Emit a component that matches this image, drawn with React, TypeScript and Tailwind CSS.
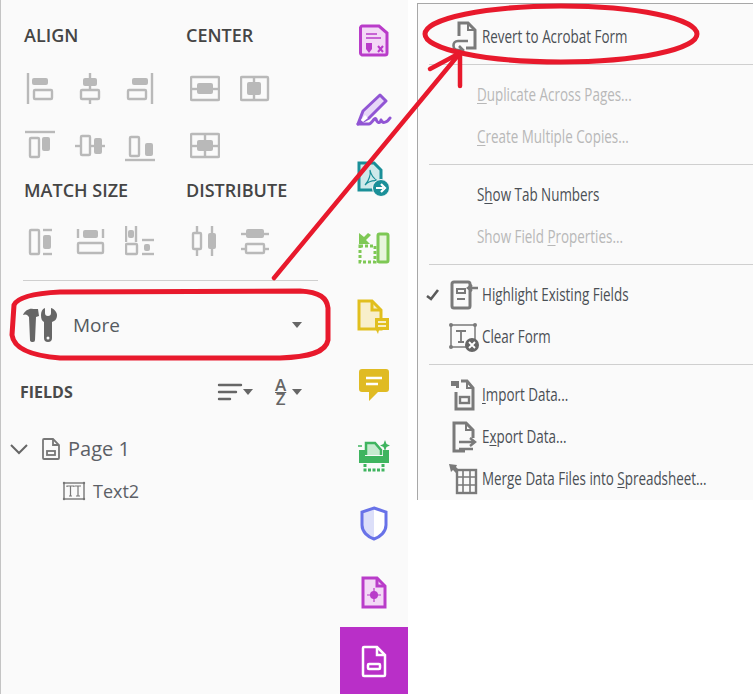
import React from "react";

const G = "#b9b9b9";

function Tool({ children }: { children: React.ReactNode }) {
  return (
    <svg width="30" height="32" viewBox="0 0 30 32" fill="none" stroke={G} strokeWidth="2.4" className="shrink-0">
      {children}
    </svg>
  );
}

const F = ({ x, y, w, h }: { x: number; y: number; w: number; h: number }) => (
  <rect x={x} y={y} width={w} height={h} rx="2" fill={G} stroke="none" />
);
const O = ({ x, y, w, h }: { x: number; y: number; w: number; h: number }) => (
  <rect x={x} y={y} width={w} height={h} rx="1" />
);
const L = ({ x1, y1, x2, y2 }: { x1: number; y1: number; x2: number; y2: number }) => (
  <line x1={x1} y1={y1} x2={x2} y2={y2} />
);

function SectionTitle({ children, className = "" }: { children: React.ReactNode; className?: string }) {
  return <div className={`text-[18px] leading-[24px] font-semibold text-[#454545] ${className}`}>{children}</div>;
}

function Row({ children }: { children: React.ReactNode }) {
  return <div className="flex gap-[20px]">{children}</div>;
}

function AlignPanel() {
  return (
    <div className="grid grid-cols-[162px_1fr] pl-[23px]">
      <div>
        <SectionTitle className="mt-[23px]">ALIGN</SectionTitle>
        <div className="ml-[1px] mt-[26px]">
          <Row>
            <Tool><L x1={3} y1={0} x2={3} y2={31} /><F x={7} y={5} w={16} h={7} /><O x={9} y={17} w={18} h={9} /></Tool>
            <Tool><L x1={15} y1={0} x2={15} y2={31} /><F x={8} y={5} w={14} h={8} /><rect x="6" y="17" width="18" height="9" rx="1" fill="#fafafa" /></Tool>
            <Tool><L x1={27} y1={0} x2={27} y2={31} /><F x={7} y={5} w={16} h={7} /><O x={3} y={17} w={18} h={9} /></Tool>
          </Row>
          <div className="mt-[25px]">
            <Row>
              <Tool><L x1={0} y1={2} x2={30} y2={2} /><O x={5} y={8} w={9} h={19} /><F x={17} y={7} w={8} h={14} /></Tool>
              <Tool><L x1={0} y1={16} x2={30} y2={16} /><rect x="6" y="6" width="9" height="19" rx="1" fill="#fafafa" /><F x={19} y={8} w={8} h={16} /></Tool>
              <Tool><L x1={0} y1={30} x2={30} y2={30} /><O x={5} y={7} w={9} h={19} /><F x={20} y={13} w={8} h={13} /></Tool>
            </Row>
          </div>
        </div>
        <SectionTitle className="mt-[16px]">MATCH SIZE</SectionTitle>
        <div className="ml-[1px] mt-[24px]">
          <Row>
            <Tool><O x={5} y={4} w={9} h={24} /><L x1={18} y1={4} x2={27} y2={4} /><L x1={18} y1={28} x2={27} y2={28} /><F x={18} y={9} w={8} h={14} /></Tool>
            <Tool><O x={3} y={17} w={25} h={10} /><L x1={3} y1={3} x2={3} y2={12} /><L x1={28} y1={3} x2={28} y2={12} /><F x={8} y={4} w={15} h={8} /></Tool>
            <Tool><L x1={1} y1={0} x2={1} y2={16} /><L x1={11} y1={0} x2={11} y2={16} /><F x={3} y={4} w={6} h={8} /><O x={1} y={18} w={11} h={10} /><L x1={17} y1={14} x2={29} y2={14} /><L x1={17} y1={28} x2={29} y2={28} /><F x={19} y={18} w={6} h={7} /></Tool>
          </Row>
        </div>
      </div>
      <div>
        <SectionTitle className="mt-[23px]">CENTER</SectionTitle>
        <div className="ml-[4px] mt-[26px]">
          <Row>
            <Tool><O x={1} y={4} w={28} h={23} /><L x1={1} y1={16} x2={29} y2={16} /><F x={7} y={10} w={16} h={11} /></Tool>
            <Tool><O x={1} y={4} w={27} h={23} /><L x1={14} y1={4} x2={14} y2={27} /><F x={7} y={9} w={14} h={13} /></Tool>
          </Row>
          <div className="mt-[25px]">
            <Row>
              <Tool><O x={1} y={4} w={28} h={23} /><L x1={1} y1={16} x2={29} y2={16} /><L x1={15} y1={4} x2={15} y2={27} /><F x={7} y={10} w={16} h={11} /></Tool>
            </Row>
          </div>
        </div>
        <SectionTitle className="mt-[16px]">DISTRIBUTE</SectionTitle>
        <div className="ml-[4px] mt-[24px]">
          <Row>
            <Tool><L x1={7} y1={0} x2={7} y2={30} /><rect x="3" y="7" width="8" height="16" rx="1" fill="#fafafa" /><L x1={22} y1={0} x2={22} y2={30} /><F x={18} y={7} w={8} h={16} /></Tool>
            <Tool><L x1={1} y1={8} x2={29} y2={8} /><F x={6} y={3} w={18} h={9} /><L x1={1} y1={23} x2={29} y2={23} /><rect x="6" y="18" width="18" height="9" rx="1" fill="#fafafa" /></Tool>
          </Row>
        </div>
      </div>
    </div>
  );
}

function MoreIcon() {
  return (
    <svg width="36" height="36" viewBox="0 0 36 36" fill="#666666">
      <path d="M1 8 C3 3 8 1 11 2 L16 2 L17 9 L14 10 L13 33 Q13 35 11 35 Q8 35 8 33 L7 10 C5 7 3 7 1 8 Z" />
      <path d="M23 1 L23 6 Q23 9 26 9 Q29 9 29 6 L29 1 C33 2 35 6 35 8 C35 12 33 14 30 15 L30 31 Q30 35 26 35 Q22 35 22 31 L22 15 C20 14 19 12 19 8 C19 5 20 2 23 1 Z" />
      <circle cx="26" cy="31" r="1.5" fill="#fafafa" />
    </svg>
  );
}

function Caret({ className = "" }: { className?: string }) {
  return <div className={`w-0 h-0 border-x-[5px] border-x-transparent border-t-[6px] border-t-[#666666] ${className}`} />;
}

function LeftPanel() {
  return (
    <div className="w-[340px] shrink-0 h-full bg-[#fafafa] border-l border-l-[#c4c4c4] font-['Open_Sans',sans-serif]">
      <AlignPanel />
      <div className="ml-[22px] w-[295px] h-px bg-[#cfcfcf] mt-[22px]" />
      <div className="flex items-center h-[44px] mt-[22px] pl-[21px]">
        <MoreIcon />
        <span className="ml-[15px] text-[19px] leading-[26px] text-[#555a60]">More</span>
        <Caret className="ml-[172px]" />
      </div>
      <div className="flex items-center h-[30px] mt-[30px] pl-[19px]">
        <span className="text-[16px] font-bold text-[#4a4a4a] w-[197px]">FIELDS</span>
        <svg width="26" height="20" viewBox="0 0 26 20" fill="none" stroke="#666666" strokeWidth="2.4" strokeLinecap="round">
          <path d="M2 3H24M2 10H19M2 17H13" />
        </svg>
        <Caret />
        <div className="ml-[22px] flex flex-col items-center text-[17px] leading-[14px] font-semibold text-[#666666]">
          <span className="underline decoration-1 underline-offset-[1px]">A</span>
          <span>Z</span>
        </div>
        <Caret className="ml-[6px]" />
      </div>
      <div className="flex items-center h-[30px] mt-[27px] pl-[8px]">
        <svg width="20" height="14" viewBox="0 0 20 14" fill="none" stroke="#666666" strokeWidth="2">
          <path d="M2 3L10 11L18 3" />
        </svg>
        <svg width="18" height="22" viewBox="0 0 18 22" fill="none" stroke="#777777" strokeWidth="1.8" className="ml-[13px]">
          <path d="M2 1H11L17 7V20A1 1 0 0 1 16 21H2A1 1 0 0 1 1 20V2A1 1 0 0 1 2 1Z" />
          <path d="M11 1V7H17" />
          <rect x="5" y="13" width="8" height="4" />
        </svg>
        <span className="ml-[8px] text-[20px] text-[#5c6066] leading-[26px]">Page 1</span>
      </div>
      <div className="flex items-center h-[28px] mt-[13px] pl-[61px]">
        <svg width="24" height="20" viewBox="0 0 24 20" fill="none" stroke="#777777" strokeWidth="1.4">
          <rect x="2" y="2" width="20" height="16" />
          <path d="M5 6V5H12V6M8.500 5V15M7 15H10M13 5H19M16 5V15M14 15H18" strokeWidth="1.200" />
          <circle cx="2" cy="2" r="1.200" fill="#777777" stroke="none" />
          <circle cx="22" cy="2" r="1.200" fill="#777777" stroke="none" />
          <circle cx="2" cy="18" r="1.200" fill="#777777" stroke="none" />
          <circle cx="22" cy="18" r="1.200" fill="#777777" stroke="none" />
        </svg>
        <span className="ml-[7px] text-[18px] text-[#5c6066] leading-[26px]">Text2</span>
      </div>
    </div>
  );
}

function RailSlot({ children, active = false }: { children: React.ReactNode; active?: boolean }) {
  return (
    <div className={`h-[69px] shrink-0 flex items-center justify-center ${active ? "bg-[#b92fc8]" : ""}`}>
      {children}
    </div>
  );
}

function Rail() {
  return (
    <div className="w-[68px] shrink-0 h-full overflow-hidden bg-[#fafafa] pt-[6px] flex flex-col">
      <RailSlot>
        <svg width="30" height="33" viewBox="0 0 30 33" fill="#f3d9f6" stroke="#b93cc9" strokeWidth="3">
          <path d="M3 2H20L28 9V29A2 2 0 0 1 26 31H3A2 2 0 0 1 1.500 29V3.500A2 2 0 0 1 3 2Z" />
          <path d="M7 10H18M7 14H22" strokeWidth="1.500" fill="none" />
          <path d="M7 19H13V25L10 29L7 25Z" fill="#b93cc9" stroke="none" />
          <path d="M19 22L24 28M24 22L19 28" strokeWidth="2" fill="none" />
        </svg>
      </RailSlot>
      <RailSlot>
        <svg width="36" height="34" viewBox="0 0 36 34" fill="#e7d7f7" stroke="#9155d4" strokeWidth="3" strokeLinejoin="round">
          <path d="M2 31L7 18L24 2L30 8L13 25Z" />
          <path d="M2 31H13C16 31 18 24 20 26C21 30 24 31 25 27C26 30 30 31 34 25" fill="none" strokeLinecap="round" />
          <path d="M5 27L9 22L12 25L7 29Z" fill="#ffffff" stroke="none" />
        </svg>
      </RailSlot>
      <RailSlot>
        <svg width="34" height="36" viewBox="0 0 34 36" fill="#cfe9ea" stroke="#1a8f98" strokeWidth="3">
          <path d="M2 2H17L24 9V29H2Z" />
          <path d="M8 24C12 20 14 13 13 9C14 14 17 18 21 20C16 19 12 20 8 24Z" fill="none" strokeWidth="1.200" />
          <circle cx="24" cy="27" r="8.500" fill="#1a8f98" stroke="#fafafa" strokeWidth="1" />
          <path d="M19 27H26M24 23L28 27L24 31" stroke="#ffffff" strokeWidth="2.200" fill="none" />
        </svg>
      </RailSlot>
      <RailSlot>
        <svg width="32" height="32" viewBox="0 0 32 32" fill="none" stroke="#7ec855" strokeWidth="3">
          <rect x="20" y="2" width="10" height="28" rx="1.500" fill="#e8f5dd" />
          <path d="M2 14H17V30H2Z" strokeDasharray="3 2" />
          <path d="M1 1L1 12L12 12L8 8L13 3L10 1L6 5L1 1Z" fill="#7ec855" stroke="none" />
        </svg>
      </RailSlot>
      <RailSlot>
        <svg width="34" height="36" viewBox="0 0 34 36" fill="#f8efca" stroke="#e1bf1e" strokeWidth="3">
          <path d="M2 2H15L24 11V30H2Z" />
          <path d="M15 2V11H24" fill="none" />
          <path d="M18 19H32V31H22L21 35L19 31H18Z" fill="#e1bf1e" stroke="none" />
          <path d="M21 23H29M21 27H29" stroke="#ffffff" strokeWidth="1.500" />
        </svg>
      </RailSlot>
      <RailSlot>
        <svg width="30" height="33" viewBox="0 0 30 33" fill="#e0bb23">
          <path d="M3 0H27A3 3 0 0 1 30 3V20A3 3 0 0 1 27 23H19L10 32V23H3A3 3 0 0 1 0 20V3A3 3 0 0 1 3 0Z" />
          <path d="M7 9H23M7 15H19" stroke="#ffffff" strokeWidth="2.500" />
        </svg>
      </RailSlot>
      <RailSlot>
        <svg width="34" height="34" viewBox="0 0 34 34" fill="none" stroke="#3fb45f" strokeWidth="2.500">
          <path d="M9 17V5H18L24 12V17" fill="#c6ebcf" />
          <path d="M2 12H8V18H26V12H32V25H2Z" fill="#3fb45f" stroke="none" />
          <path d="M8 26V32H26V26" strokeDasharray="3 1.500" strokeWidth="3" />
          <path d="M28 2L29.500 6L33 7.500L29.500 9L28 13L26.500 9L23 7.500L26.500 6Z" fill="#3fb45f" stroke="none" />
          <path d="M1 8H5" strokeWidth="1.500" />
        </svg>
      </RailSlot>
      <RailSlot>
        <svg width="28" height="35" viewBox="0 0 28 35" fill="none" stroke="#6872e8" strokeWidth="3">
          <path d="M14 2L26 6V19C26 26 20 31 14 33Z" fill="#ffffff" stroke="none" />
          <path d="M14 2L2 6V19C2 26 8 31 14 33Z" fill="#dcdff9" stroke="none" />
          <path d="M14 2L26 6V19C26 26 20 31 14 33C8 31 2 26 2 19V6Z" />
        </svg>
      </RailSlot>
      <RailSlot>
        <svg width="26" height="33" viewBox="0 0 26 33" fill="#f3d9f6" stroke="#b93cc9" strokeWidth="3">
          <path d="M2 2H16L24 10V31H2Z" />
          <path d="M16 2V10H24" fill="none" />
          <circle cx="13" cy="19" r="4" fill="#b93cc9" stroke="none" />
          <path d="M13 12V26M6 19H20" strokeWidth="1.200" />
        </svg>
      </RailSlot>
      <RailSlot active>
        <svg width="26" height="33" viewBox="0 0 26 33" fill="none" stroke="#ffffff" strokeWidth="2.500">
          <path d="M3 2H16L24 10V30A1 1 0 0 1 23 31H3A1 1 0 0 1 2 30V3A1 1 0 0 1 3 2Z" />
          <path d="M16 2V10H24" />
          <rect x="7" y="19" width="12" height="5" rx="1" />
        </svg>
      </RailSlot>
    </div>
  );
}

function MenuIcon({ children }: { children: React.ReactNode }) {
  return (
    <svg width="34" height="34" viewBox="0 0 34 34" fill="none" stroke="#7a7a7a" strokeWidth="3" className="shrink-0">
      {children}
    </svg>
  );
}

function MenuRow({
  children,
  icon,
  disabled = false,
  checked = false,
}: {
  children: React.ReactNode;
  icon?: React.ReactNode;
  disabled?: boolean;
  checked?: boolean;
}) {
  return (
    <div className="flex items-center h-[42px]">
      <div className="w-[27px] shrink-0 pl-[8px]">
        {checked && (
          <svg width="14" height="12" viewBox="0 0 14 12" fill="none" stroke="#5a5a5a" strokeWidth="2.600">
            <path d="M1 7L5 10L12 1" />
          </svg>
        )}
      </div>
      <div className={icon ? "w-[37px] shrink-0 flex justify-center" : "w-[32px] shrink-0"}>{icon}</div>
      <span
        className={`origin-left scale-x-[0.706] -translate-y-px whitespace-nowrap text-[19px] leading-[24px] font-['Open_Sans',sans-serif] ${
          disabled ? "text-[#b8b8b8]" : "text-[#4a4f55]"
        }`}
      >
        {children}
      </span>
    </div>
  );
}

function Sep() {
  return <div className="ml-[11px] h-px bg-[#cfcfcf] mt-[6px] mb-[9px]" />;
}

function Menu() {
  return (
    <div className="w-[336px] h-[497px] mt-[3px] ml-[9px] shrink-0 overflow-hidden bg-[#fafafa] border-l border-t border-[#a8a8a8] pt-[12px]">
      <MenuRow
        icon={
          <MenuIcon>
            <path d="M12 16V3H21L28 10V28H19" />
            <path d="M21 3V10H28" strokeWidth="2" />
            <path d="M21 21H11C5 21 5 30 11 30H14M12 26L16 30L12 34" strokeWidth="2.600" />
          </MenuIcon>
        }
      >
        Revert to Acrobat Form
      </MenuRow>
      <Sep />
      <MenuRow disabled><u className="underline-offset-2">D</u>uplicate Across Pages...</MenuRow>
      <MenuRow disabled><u className="underline-offset-2">C</u>reate Multiple Copies...</MenuRow>
      <Sep />
      <MenuRow>S<u className="underline-offset-2">h</u>ow Tab Numbers</MenuRow>
      <MenuRow disabled>Show Field <u className="underline-offset-2">P</u>roperties...</MenuRow>
      <Sep />
      <MenuRow
        checked
        icon={
          <MenuIcon>
            <rect x="5" y="4" width="18" height="26" rx="2" />
            <path d="M10 11H18V15H10ZM10 21H18" strokeWidth="2" />
            <path d="M31 10H21M25 7L21 10L25 13" strokeWidth="2.400" />
          </MenuIcon>
        }
      >
        Highlight Existing Fields
      </MenuRow>
      <MenuRow
        icon={
          <MenuIcon>
            <rect x="4" y="5" width="24" height="22" strokeWidth="1.500" />
            <path d="M9 11H19M14 11V22M11 22H17" strokeWidth="1.800" />
            <circle cx="4" cy="5" r="2" fill="#7a7a7a" stroke="none" />
            <circle cx="28" cy="5" r="2" fill="#7a7a7a" stroke="none" />
            <circle cx="4" cy="27" r="2" fill="#7a7a7a" stroke="none" />
            <circle cx="25" cy="25" r="7" fill="#666666" stroke="none" />
            <path d="M22 22L28 28M28 22L22 28" stroke="#ffffff" strokeWidth="1.800" />
          </MenuIcon>
        }
      >
        Clear Form
      </MenuRow>
      <Sep />
      <MenuRow
        icon={
          <MenuIcon>
            <path d="M9 14V31H26V10L20 3H14" />
            <path d="M20 3V10H26" strokeWidth="2" />
            <rect x="13" y="19" width="9" height="6" strokeWidth="2.400" />
            <path d="M4 3H12V10H9V8H4Z" fill="#7a7a7a" stroke="none" />
          </MenuIcon>
        }
      >
        <u className="underline-offset-2">I</u>mport Data...
      </MenuRow>
      <MenuRow
        icon={
          <MenuIcon>
            <path d="M18 31H7V3H19L26 10V18" />
            <path d="M19 3V10H26" strokeWidth="2" />
            <path d="M12 22H26M23 18L28 22L23 26M12 29H26" strokeWidth="2.400" />
          </MenuIcon>
        }
      >
        E<u className="underline-offset-2">x</u>port Data...
      </MenuRow>
      <MenuRow
        icon={
          <MenuIcon>
            <rect x="10" y="8" width="19" height="23" strokeWidth="2.400" />
            <path d="M10 15H29M10 23H29M16 8V31M23 8V31" strokeWidth="1.600" />
            <path d="M2 2L10 3L9 5L12 8L9 11L6 8L4 10Z" fill="#7a7a7a" stroke="none" />
          </MenuIcon>
        }
      >
        Merge Data Files into <u className="underline-offset-2">S</u>preadsheet...
      </MenuRow>
    </div>
  );
}

function Annotations() {
  return (
    <svg className="absolute left-0 top-0 pointer-events-none" width="753" height="694" viewBox="0 0 753 694" fill="none" stroke="#e8192c" strokeWidth="4.500" strokeLinecap="round" strokeLinejoin="round">
      <path d="M14 305 C18 296 40 293 60 292 L300 291 C320 292 327 298 328 308 L328 340 C326 352 310 357 280 358 L60 358 C35 356 14 350 12 335 Z" strokeWidth="5" />
      <ellipse cx="561" cy="34" rx="136" ry="28" strokeWidth="5" />
      <path d="M274 278L460 53" />
      <path d="M430 69L460 53L460 86" />
    </svg>
  );
}

export default function App() {
  return (
    <div className="relative flex w-[753px] h-[694px] overflow-hidden bg-white">
      <LeftPanel />
      <Rail />
      <Menu />
      <Annotations />
    </div>
  );
}
